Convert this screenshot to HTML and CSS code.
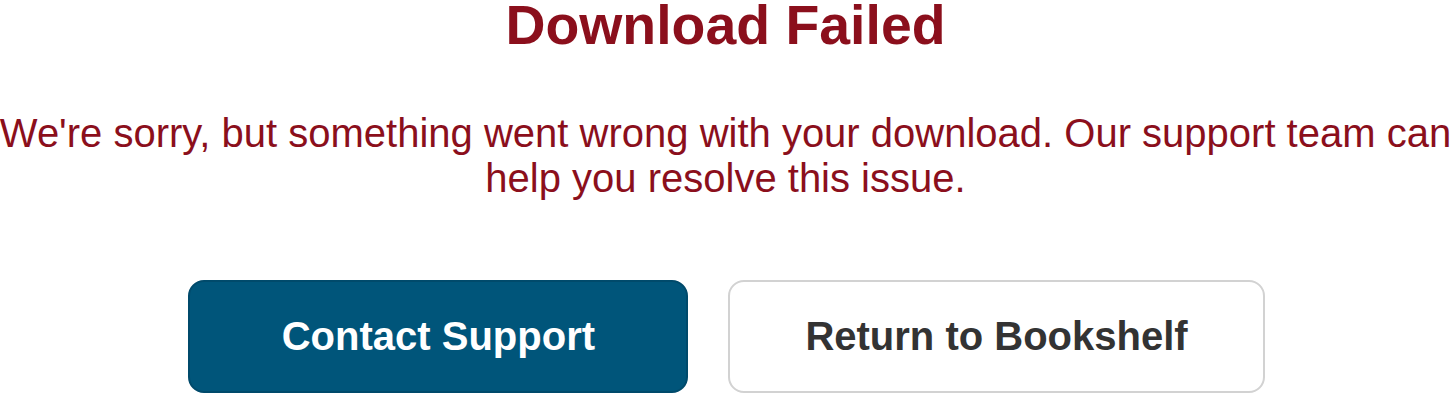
FILE: index.html
```html
<!DOCTYPE html>
<html lang="en">
<head>
<meta charset="utf-8">
<title>Download Failed</title>
<link rel="stylesheet" href="styles.css">
</head>
<body>
<main class="error-page">
  <h1 class="error-title">Download Failed</h1>
  <p class="error-message">We're sorry, but something went wrong with your download. Our support team can help you resolve this issue.</p>
  <div class="actions">
    <button class="btn btn-primary" type="button">Contact Support</button>
    <button class="btn btn-secondary" type="button">Return to Bookshelf</button>
  </div>
</main>
</body>
</html>
```

FILE: styles.css
```css
html, body {
  margin: 0;
  padding: 0;
  background: #ffffff;
}

body {
  font-family: "Liberation Sans", Arial, sans-serif;
  overflow: hidden;
}

.error-page {
  display: flex;
  flex-direction: column;
  align-items: center;
  text-align: center;
  margin-top: -7px;
}

.error-title {
  margin: 0 0 54px;
  font-size: 55.4px;
  font-weight: 700;
  line-height: normal;
  color: #8b0f1c;
}

.error-message {
  margin: 0 0 79px;
  font-size: 40px;
  line-height: normal;
  color: #8b0f1c;
  width: 1480px;
  flex-shrink: 0;
}

.actions {
  display: flex;
  gap: 40px;
  justify-content: center;
  padding-left: 2px;
}

.btn {
  font-family: "Liberation Sans", Arial, sans-serif;
  font-size: 40px;
  font-weight: 700;
  line-height: normal;
  min-width: 500px;
  padding: 32px 75px;
  border-radius: 16px;
  cursor: pointer;
}

.btn-primary {
  background: #00557a;
  color: #ffffff;
  border: 2px solid #004a6b;
}

.btn-secondary {
  background: #ffffff;
  color: #333333;
  border: 2px solid #d2d2d2;
}
```
